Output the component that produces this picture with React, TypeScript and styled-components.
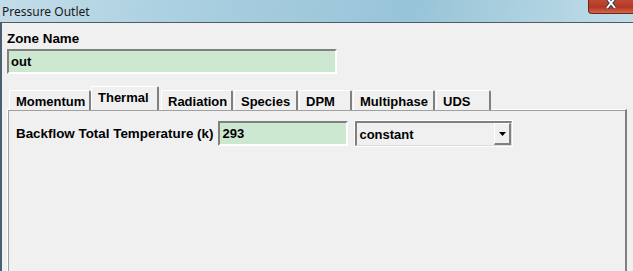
import React from "react";
import styled, { createGlobalStyle } from "styled-components";

const GlobalStyle = createGlobalStyle`
  html, body {
    margin: 0;
    padding: 0;
    background: #f0f0f0;
  }
`;

const Window = styled.div`
  width: 633px;
  height: 271px;
  overflow: hidden;
  display: flex;
  flex-direction: column;
  background: #f0f0f0;
  font-family: "Liberation Sans", Arial, sans-serif;
`;

const TitleBar = styled.div`
  position: relative;
  height: 22px;
  flex: none;
  display: flex;
  align-items: center;
  padding-left: 2px;
  background: linear-gradient(100deg, #c3dde9 0%, #a9cfe0 30%, #98c4d8 65%, #c0dde7 100%);
  border-bottom: 1px solid #4d5c68;
  font-family: "Noto Sans", "Open Sans", sans-serif;
  font-size: 12px;
  color: #1a1a1a;
`;

const CloseButton = styled.div`
  position: absolute;
  top: 0;
  right: 0;
  box-sizing: border-box;
  width: 45px;
  height: 14px;
  border: 1px solid #6e2518;
  border-top: none;
  border-right: none;
  border-bottom-left-radius: 4px;
  background: linear-gradient(#c04a36, #b33823 55%, #d4654c);
  display: flex;
  justify-content: center;
  align-items: flex-start;
`;

const Body = styled.div`
  flex: 1;
  border-left: 2px solid #4a6070;
  padding: 8px 0 0 5px;
  display: flex;
  flex-direction: column;
`;

const Label = styled.div`
  font-size: 13.4px;
  font-weight: bold;
  color: #000;
  line-height: 15px;
  white-space: nowrap;
`;

const Entry = styled.div<{ $w: number }>`
  box-sizing: border-box;
  width: ${(p) => p.$w}px;
  height: 25px;
  background: #cde8d0;
  border-top: 2px solid #808080;
  border-left: 2px solid #808080;
  border-right: 2px solid #ffffff;
  border-bottom: 2px solid #ffffff;
  padding-left: 2px;
  display: flex;
  align-items: center;
  font-size: 13px;
  font-weight: bold;
  color: #000;
`;

const ZoneBlock = styled.div`
  display: flex;
  flex-direction: column;
  gap: 3px;
`;

const Tabs = styled.div`
  margin-top: 12px;
  display: flex;
  flex-direction: column;
  flex: 1;
`;

const TabRow = styled.div`
  display: flex;
  align-items: flex-end;
  height: 24px;
  padding-left: 2px;
  position: relative;
  z-index: 1;
  margin-bottom: -1px;
`;

const Tab = styled.div<{ $w: number; $active?: boolean }>`
  box-sizing: border-box;
  width: ${(p) => p.$w}px;
  height: ${(p) => (p.$active ? 24 : 20)}px;
  margin-right: ${(p) => (p.$active ? 2 : 1)}px;
  margin-left: ${(p) => (p.$active ? -1 : 0)}px;
  background: #f0f0f0;
  border-top: 1px solid #ffffff;
  border-left: 1px solid #ffffff;
  border-right: 2px solid #808080;
  border-top-left-radius: 2px;
  border-top-right-radius: 2px;
  padding: 3px 0 0 6px;
  font-size: 13px;
  font-weight: bold;
  color: #000;
  line-height: 15px;
  white-space: nowrap;
`;

const Panel = styled.div`
  width: 620px;
  box-sizing: border-box;
  flex: 1;
  border-top: 1px solid #ffffff;
  border-left: 1px solid #ffffff;
  border-right: 2px solid #808080;
  box-shadow: inset 1px 1px 0 #a0a0a0;
  padding: 10px 0 0 8px;
`;

const FieldRow = styled.div`
  display: flex;
  align-items: center;
  gap: 5px;
`;

const Select = styled.div`
  box-sizing: border-box;
  margin-left: 1px;
  width: 159px;
  height: 27px;
  border: 1px solid #ffffff;
  display: flex;
`;

const SelectInner = styled.div`
  flex: 1;
  display: flex;
  align-items: center;
  border-top: 2px solid #808080;
  border-left: 2px solid #808080;
  border-right: 1px solid #dcdcdc;
  border-bottom: 1px solid #dcdcdc;
  background: #f0f0f0;
`;

const SelectText = styled.div`
  flex: 1;
  padding-left: 2px;
  font-size: 13px;
  font-weight: bold;
  color: #000;
`;

const ArrowButton = styled.div`
  box-sizing: border-box;
  width: 17px;
  height: 100%;
  border-top: 1px solid #ffffff;
  border-left: 1px solid #ffffff;
  border-right: 2px solid #808080;
  border-bottom: 2px solid #808080;
  display: flex;
  align-items: center;
  justify-content: center;
`;

const tabs = [
  { label: "Momentum", w: 82 },
  { label: "Thermal", w: 68, active: true },
  { label: "Radiation", w: 72 },
  { label: "Species", w: 64 },
  { label: "DPM", w: 53 },
  { label: "Multiphase", w: 82 },
  { label: "UDS", w: 55 },
];

export default function App() {
  return (
    <Window>
      <GlobalStyle />
      <TitleBar>
        Pressure Outlet
        <CloseButton>
          <svg width="14" height="9" viewBox="0 0 14 9">
            <path d="M3 -2 L11 8 M11 -2 L3 8" stroke="#3b3f4a" strokeWidth="4" />
            <path d="M3 -2 L11 8 M11 -2 L3 8" stroke="#ffffff" strokeWidth="2" />
          </svg>
        </CloseButton>
      </TitleBar>
      <Body>
        <ZoneBlock>
          <Label>Zone Name</Label>
          <Entry $w={330}>out</Entry>
        </ZoneBlock>
        <Tabs>
          <TabRow>
            {tabs.map((t) => (
              <Tab key={t.label} $w={t.w} $active={t.active}>
                {t.label}
              </Tab>
            ))}
          </TabRow>
          <Panel>
            <FieldRow>
              <Label>Backflow Total Temperature (k)</Label>
              <Entry $w={130}>293</Entry>
              <Select>
                <SelectInner>
                  <SelectText>constant</SelectText>
                  <ArrowButton>
                    <svg width="7" height="4" viewBox="0 0 7 4">
                      <path d="M0 0 H7 L3.5 4 Z" fill="#000" />
                    </svg>
                  </ArrowButton>
                </SelectInner>
              </Select>
            </FieldRow>
          </Panel>
        </Tabs>
      </Body>
    </Window>
  );
}
